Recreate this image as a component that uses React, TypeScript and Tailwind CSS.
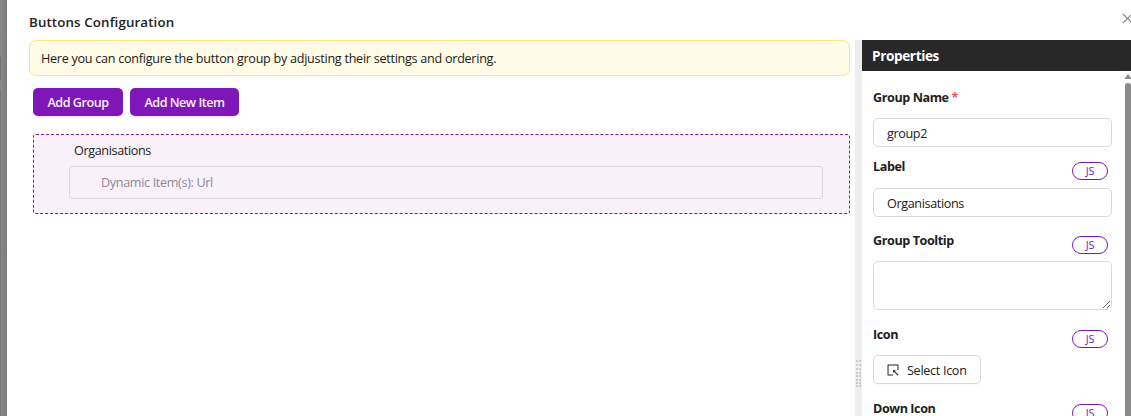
import type { ReactNode } from "react";
import { AiOutlineClose, AiOutlineSelect } from "react-icons/ai";

function FieldHeader({ children, js = true, height }: { children: ReactNode; js?: boolean; height: string }) {
  return (
    <div className={`flex shrink-0 items-start justify-between pr-1 ${height}`}>
      <span className="pt-px text-[12.6px] leading-[18px] font-bold tracking-[-0.42px]">{children}</span>
      {js && (
        <button className="mt-[5px] flex h-[18px] w-9 items-center justify-center rounded-full border border-[#7f17b8] bg-white pb-px text-[11px] leading-none tracking-[-0.2px] text-[#7f17b8]">
          JS
        </button>
      )}
    </div>
  );
}

function TextInput({ value }: { value: string }) {
  return (
    <input
      readOnly
      value={value}
      className="h-[29px] w-full shrink-0 rounded-[5px] border border-[#d9d9d9] bg-white px-[13px] pt-[2px] text-[12.6px] tracking-[-0.36px] outline-none"
    />
  );
}

function DragHandle() {
  return (
    <svg width="5" height="27" viewBox="0 0 5 27" fill="#cbcbcb" shapeRendering="crispEdges">
      {[0, 4, 8, 12, 15, 19, 22, 25].map((y) => (
        <g key={y}>
          <rect x="0" y={y} width="2" height="2" />
          <rect x="3" y={y} width="2" height="2" />
        </g>
      ))}
    </svg>
  );
}

export default function App() {
  return (
    <div className="flex h-[416px] w-[1131px] overflow-hidden bg-white font-['Open_Sans','Noto_Sans',sans-serif] text-[12.6px] text-[#212121]">
      <div className="flex w-[7px] shrink-0 flex-col bg-linear-to-r from-[#8a8a8a] to-[#7b7b7b]">
        <div className="mt-[38px] h-px w-px bg-[#777]" />
        <div className="mt-[18px] h-[23px] w-px bg-[#747474]" />
        <div className="mt-[10px] w-px flex-1 bg-[#777]" />
      </div>
      <div className="flex min-w-0 flex-1 flex-col">
        <header className="flex h-10 shrink-0 items-center justify-between pt-1 pl-[22px]">
          <h1 className="pt-[2px] text-[13.3px] font-semibold tracking-[0.13px]">Buttons Configuration</h1>
          <AiOutlineClose className="-mt-2 -mr-1 size-[15px] text-[#858585]" />
        </header>
        <div className="flex min-h-0 flex-1">
          <main className="w-[848px] shrink-0 pr-[5px] pl-[22px]">
            <div className="flex h-9 items-center rounded-[7px] border border-[#ffe58f] bg-[#fffbe6] pt-[2px] pl-[11px]">
              <span className="tracking-[-0.27px] whitespace-nowrap">
                Here you can configure the button group by adjusting their settings and ordering.
              </span>
            </div>
            <div className="mt-3 ml-1 flex gap-[7px] text-white">
              <button className="h-7 w-[90px] rounded-[5px] bg-[#7f17b8] pt-[2px] font-semibold tracking-[-0.48px] whitespace-nowrap text-[#f7effb] shadow-[0_2px_0_#f6edfa]">
                Add Group
              </button>
              <button className="h-7 w-[109px] rounded-[5px] bg-[#7f17b8] pt-[2px] font-semibold tracking-[-0.5px] whitespace-nowrap text-[#f7effb] shadow-[0_2px_0_#f6edfa]">
                Add New Item
              </button>
            </div>
            <section className="mt-[18px] ml-1 h-20 rounded-[3px] border border-dashed border-[#7f17b8] bg-[#f8f1fa] pr-[26px] pl-[35px]">
              <div className="flex h-[31px] items-center pt-[2px] pl-[5px] tracking-[-0.36px]">Organisations</div>
              <div className="flex h-[33px] items-center rounded-[3px] border border-[#d9d9d9] pt-[2px] pl-[31px] tracking-[-0.33px] text-[#8f8994]">
                Dynamic Item(s): Url
              </div>
            </section>
          </main>
          <div className="flex w-[7px] shrink-0 justify-center bg-[#ededed] pt-[320px]">
            <DragHandle />
          </div>
          <aside className="flex min-w-0 flex-1 flex-col">
            <div className="flex h-[31px] shrink-0 items-center bg-[#282828] pt-px pl-[10px] text-[13.6px] font-bold tracking-[-0.38px] text-white">
              Properties
            </div>
            <div className="flex min-h-0 flex-1">
              <div className="flex min-w-0 flex-1 flex-col overflow-hidden pt-[17px] pr-[13px] pl-[11px]">
                <FieldHeader js={false} height="h-[30px]">
                  Group Name <span className="text-[#ff4d4f]">*</span>
                </FieldHeader>
                <TextInput value="group2" />
                <div className="h-[10px] shrink-0" />
                <FieldHeader height="h-[31px]">Label</FieldHeader>
                <TextInput value="Organisations" />
                <div className="h-[14px] shrink-0" />
                <FieldHeader height="h-[30px]">Group Tooltip</FieldHeader>
                <textarea
                  readOnly
                  className="h-[49px] w-full shrink-0 resize-y rounded-[5px] border border-[#d9d9d9] bg-white outline-none"
                />
                <div className="h-[15px] shrink-0" />
                <FieldHeader height="h-[30px]">Icon</FieldHeader>
                <button className="flex h-[29px] w-[108px] shrink-0 items-center gap-[7px] rounded-[5px] border border-[#d9d9d9] pl-[12px] tracking-[-0.3px] whitespace-nowrap shadow-[0_2px_0_#fafafa]">
                  <AiOutlineSelect className="size-[14px] shrink-0" />
                  <span className="pt-[3px]">Select Icon</span>
                </button>
                <div className="h-[15px] shrink-0" />
                <FieldHeader height="h-[30px]">Down Icon</FieldHeader>
              </div>
              <div className="flex w-[6px] shrink-0 flex-col bg-[#fcfcfc] pt-[3px]">
                <svg width="6" height="5" viewBox="0 0 6 5" fill="#8b8b8b">
                  <path d="M3 0 6 4v1H0V4Z" />
                </svg>
                <div className="mt-1 flex-1 rounded-t-[3px] bg-[#8b8b8b]" />
              </div>
            </div>
          </aside>
        </div>
      </div>
    </div>
  );
}
